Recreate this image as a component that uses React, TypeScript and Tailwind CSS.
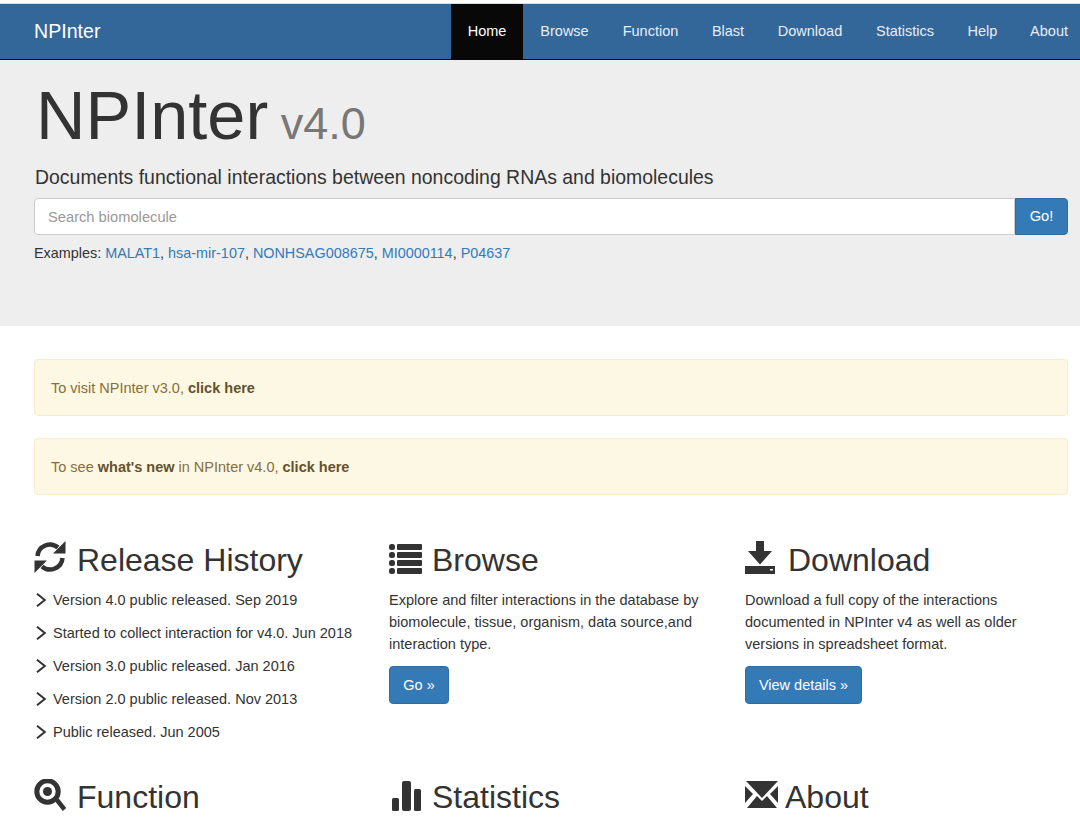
import React from "react";

const font = { fontFamily: '"Liberation Sans", Arial, sans-serif' };

function Refresh() {
  return (
    <svg width="32" height="34" viewBox="0 0 32 34" className="shrink-0 text-[#333]">
      <path d="M3.5 16 A12.5 12.5 0 0 1 24 7.5" fill="none" stroke="currentColor" strokeWidth="4.500" />
      <path d="M31.5 1 V13.5 H19 Z" fill="currentColor" />
      <path d="M28.5 18 A12.5 12.5 0 0 1 8 26.5" fill="none" stroke="currentColor" strokeWidth="4.500" />
      <path d="M0.5 33 V20.5 H13 Z" fill="currentColor" />
    </svg>
  );
}
function ListIcon() {
  return (
    <svg width="33" height="30" viewBox="0 0 33 30" className="shrink-0 text-[#333]" fill="currentColor">
      {[0, 8, 16, 24].map((y) => (
        <g key={y}>
          <rect x="0" y={y} width="6" height="6" rx="2.5" />
          <rect x="8" y={y} width="25" height="6" rx="1" />
        </g>
      ))}
    </svg>
  );
}
function DownloadIcon() {
  return (
    <svg width="30" height="33" viewBox="0 0 30 33" className="shrink-0 text-[#333]" fill="currentColor">
      <path d="M11 0 H19 V10 H27 L15 23.500 L3 10 H11 Z" />
      <path d="M0 25 H30 V33 H0 Z" />
      <rect x="25" y="28" width="3" height="1.500" fill="#fff" />
    </svg>
  );
}
function SearchIcon() {
  return (
    <svg width="32" height="32" viewBox="0 0 32 32" className="shrink-0 text-[#333]">
      <circle cx="13.500" cy="12.500" r="10.700" fill="none" stroke="currentColor" strokeWidth="5" />
      <circle cx="13.500" cy="12.500" r="4.500" fill="currentColor" />
      <path d="M23 21 L30.500 30.500" stroke="currentColor" strokeWidth="4.500" />
    </svg>
  );
}
function StatsIcon() {
  return (
    <svg width="32" height="30" viewBox="0 0 32 30" className="shrink-0 text-[#333]" fill="currentColor">
      <rect x="3" y="17" width="7" height="13" rx="1.500" />
      <rect x="13" y="0" width="9" height="30" rx="2" />
      <rect x="25" y="8" width="7" height="22" rx="1.500" />
    </svg>
  );
}
function MailIcon() {
  return (
    <svg width="33" height="27" viewBox="0 0 33 27" className="mb-[3px] shrink-0 text-[#333]" fill="currentColor">
      <path d="M1 0 H33 L17 17 Z" />
      <path d="M0 5 L8 13 L0 22 Z" />
      <path d="M33 5 L25 13 L33 22 Z" />
      <path d="M2 27 L12 15 L17 20 L22 15 L32 27 Z" />
    </svg>
  );
}
function Chevron() {
  return (
    <svg width="13" height="14" viewBox="0 0 13 14" className="shrink-0 text-[#333]">
      <path d="M2 0.800 L9.800 7 L2 13.200" fill="none" stroke="currentColor" strokeWidth="2" />
    </svg>
  );
}

const navItems = [
  { label: "Browse", w: "w-[83px]" },
  { label: "Function", w: "w-[89px]" },
  { label: "Blast", w: "w-[66px]" },
  { label: "Download", w: "w-[98px]" },
  { label: "Statistics", w: "w-[92px]" },
  { label: "Help", w: "w-[63px]" },
  { label: "About", w: "w-[54px] justify-end" },
];
const history = [
  "Version 4.0 public released. Sep 2019",
  "Started to collect interaction for v4.0. Jun 2018",
  "Version 3.0 public released. Jan 2016",
  "Version 2.0 public released. Nov 2013",
  "Public released. Jun 2005",
];

function Heading({ icon, title, gap }: { icon: React.ReactNode; title: string; gap: string }) {
  return (
    <div className={`flex h-[34px] items-end ${gap}`}>
      {icon}
      <h2 className="-mb-[4px] text-[32px] leading-[36px] font-normal text-[#333]">{title}</h2>
    </div>
  );
}

export default function App() {
  return (
    <div style={font} className="h-[827px] overflow-hidden bg-white text-[14.500px] text-[#333]">
      <div className="h-[3px] bg-white" />
      <div className="h-[1px] bg-[#d7dfe8]" />
      <nav className="flex h-[56px] items-stretch justify-between border-b border-[#080808] bg-[#33679a] pl-[34px] pr-[12px]">
        <a className="mt-[1px] self-center text-[19.600px] text-white">NPInter</a>
        <div className="flex items-stretch text-[14.500px] text-[#e8edf3]">
          <a className="flex w-[72px] items-center justify-center bg-[#080808] text-white">Home</a>
          {navItems.map((n) => (
            <a key={n.label} className={`flex items-center justify-center ${n.w}`}>
              {n.label}
            </a>
          ))}
        </div>
      </nav>
      <header className="h-[266px] bg-[#eee] pl-[34px] pr-[12px] pt-[18px]">
        <h1 className="pl-[2px] text-[68.500px] leading-[76px] font-normal text-[#333]">
          NPInter<small className="text-[45px] leading-none font-normal text-[#777]"> v4.0</small>
        </h1>
        <p className="mt-[10px] pl-[1px] text-[19.440px] leading-[26px] text-[#333]">
          Documents functional interactions between noncoding RNAs and biomolecules
        </p>
        <div className="mt-[8px] flex h-[37px]">
          <input
            placeholder="Search biomolecule"
            className="h-full flex-1 rounded-l-[4px] border border-[#ccc] bg-white px-[13px] text-[14.700px] outline-none placeholder:text-[#999]"
          />
          <button className="h-full w-[53px] rounded-r-[4px] border border-[#2e6da4] bg-[#337ab7] text-[14.700px] text-white">
            Go!
          </button>
        </div>
        <p className="mt-[7px] text-[14.400px] leading-[22px]">
          Examples: <a className="text-[#337ab7]">MALAT1</a>, <a className="text-[#337ab7]">hsa-mir-107</a>,{" "}
          <a className="text-[#337ab7]">NONHSAG008675</a>, <a className="text-[#337ab7]">MI0000114</a>,{" "}
          <a className="text-[#337ab7]">P04637</a>
        </p>
      </header>
      <main className="pl-[34px] pr-[12px] pt-[33px] text-[14.500px] leading-[22px]">
        <div className="flex h-[57px] items-center rounded-[4px] border border-[#faebcc] bg-[#fcf8e3] px-[16px] text-[#8a6d3b]">
          <span>
            To visit NPInter v3.0, <b className="text-[#66512c]">click here</b>
          </span>
        </div>
        <div className="mt-[22px] flex h-[57px] items-center rounded-[4px] border border-[#faebcc] bg-[#fcf8e3] px-[16px] text-[#8a6d3b]">
          <span>
            To see <b className="text-[#66512c]">what's new</b> in NPInter v4.0, <b className="text-[#66512c]">click here</b>
          </span>
        </div>
        <div className="mt-[45px] grid grid-cols-[355px_356px_1fr]">
          <section className="h-[237px]">
            <Heading icon={<Refresh />} title="Release History" gap="gap-[11px]" />
            <ul className="mt-[15px]">
              {history.map((h) => (
                <li key={h} className="mb-[11px] flex h-[22px] items-center gap-[5px] pl-[1px]">
                  <Chevron />
                  <span>{h}</span>
                </li>
              ))}
            </ul>
          </section>
          <section>
            <Heading icon={<ListIcon />} title="Browse" gap="gap-[10px]" />
            <p className="mt-[15px] w-[330px]">
              Explore and filter interactions in the database by biomolecule, tissue, organism, data source,and interaction type.
            </p>
            <a className="mt-[11px] inline-flex h-[38px] w-[60px] items-center justify-center rounded-[4px] border border-[#2e6da4] bg-[#337ab7] text-white">
              Go »
            </a>
          </section>
          <section>
            <Heading icon={<DownloadIcon />} title="Download" gap="gap-[13px]" />
            <p className="mt-[15px] w-[310px]">
              Download a full copy of the interactions documented in NPInter v4 as well as older versions in spreadsheet format.
            </p>
            <a className="mt-[11px] inline-flex h-[38px] w-[117px] items-center justify-center rounded-[4px] border border-[#2e6da4] bg-[#337ab7] text-white">
              View details »
            </a>
          </section>
          <section>
            <Heading icon={<SearchIcon />} title="Function" gap="gap-[11px]" />
          </section>
          <section>
            <Heading icon={<StatsIcon />} title="Statistics" gap="gap-[11px]" />
          </section>
          <section>
            <Heading icon={<MailIcon />} title="About" gap="gap-[7px]" />
          </section>
        </div>
      </main>
    </div>
  );
}
